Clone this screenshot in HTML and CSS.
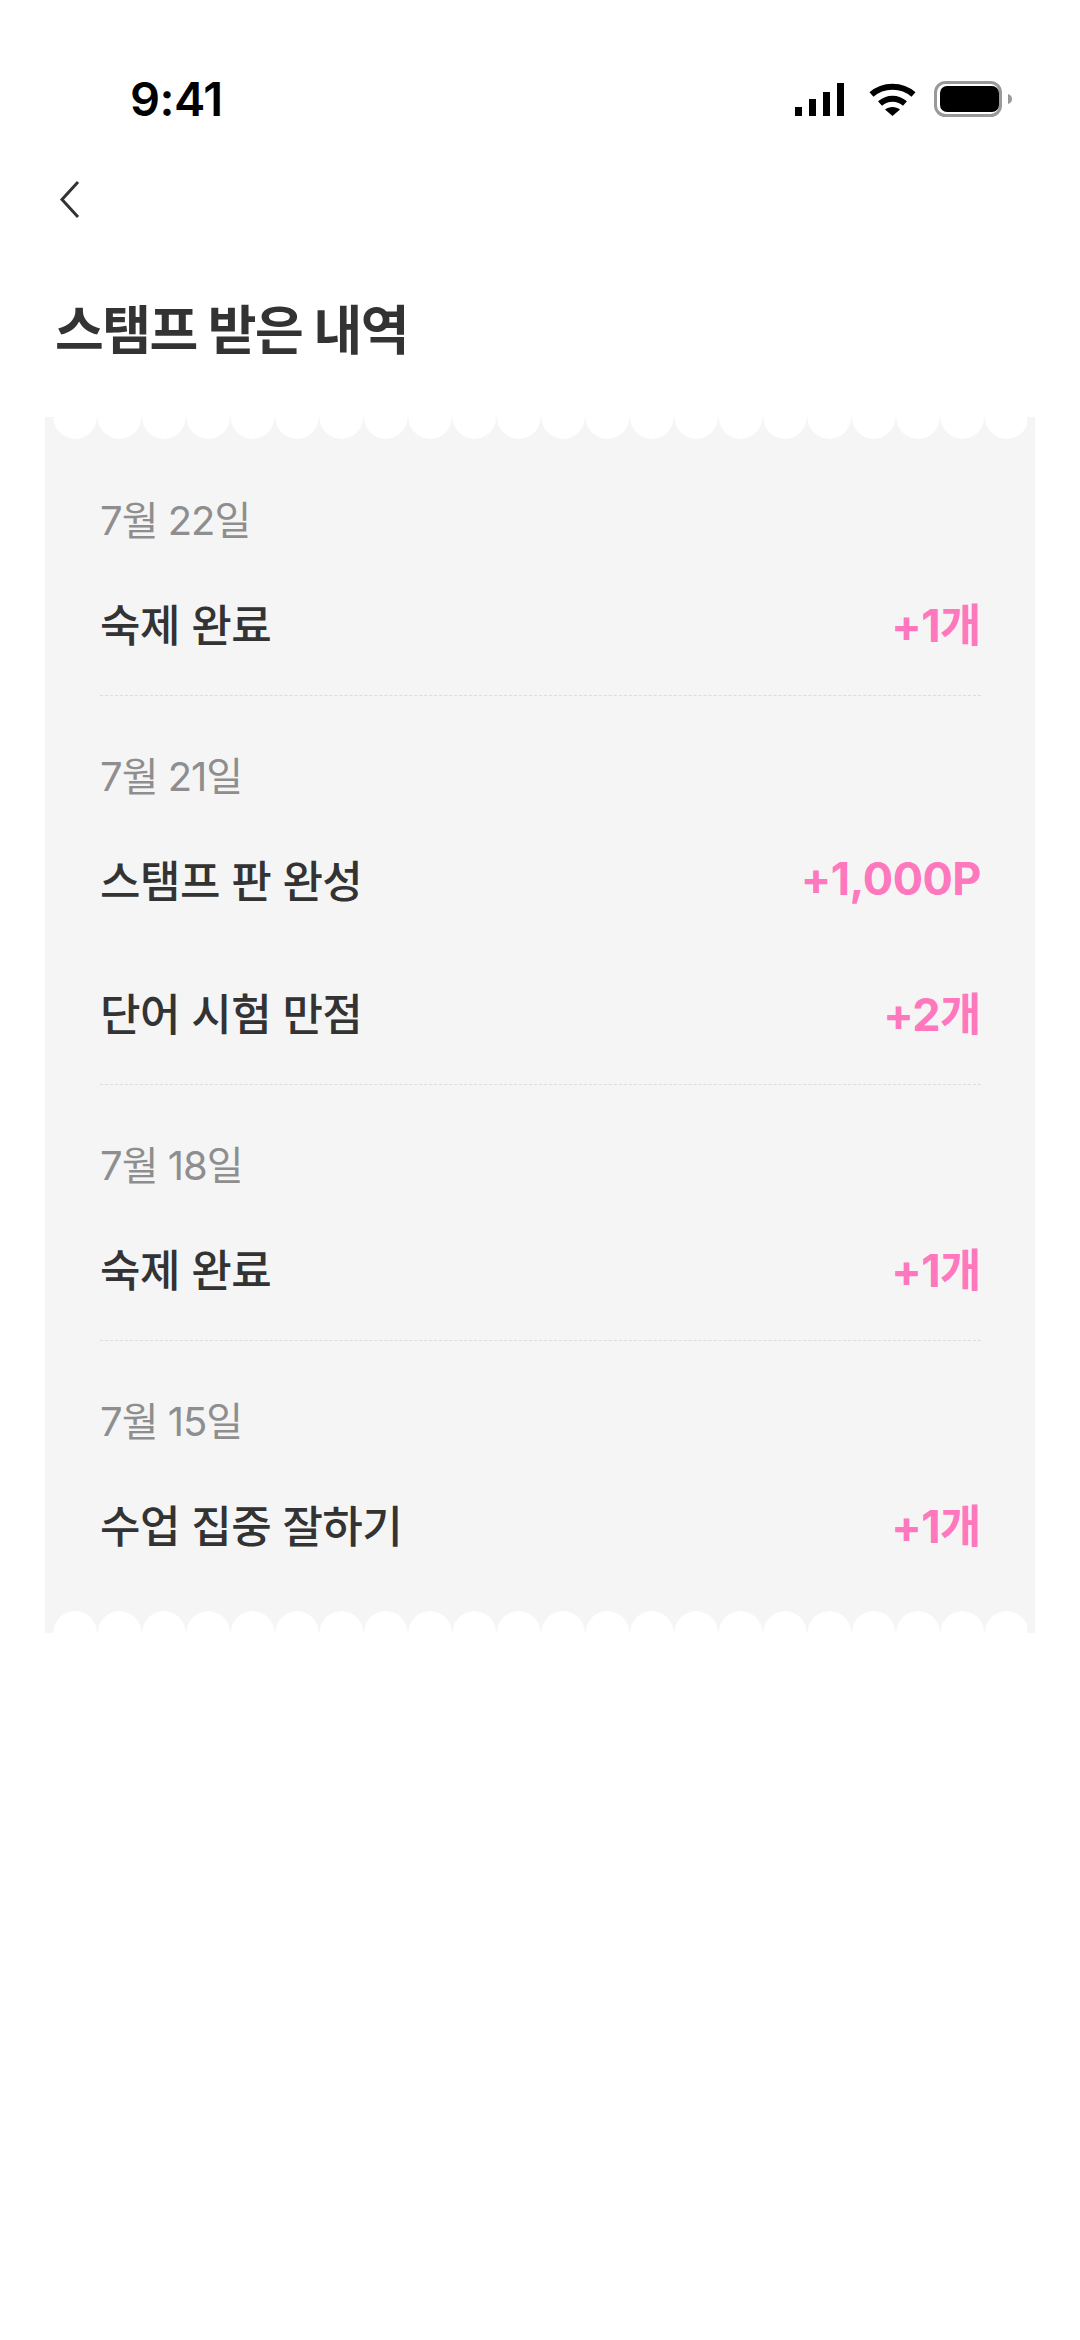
FILE: index.html
```html
<!DOCTYPE html>
<html lang="ko">
<head>
    <meta charset="UTF-8">
    <meta name="viewport" content="width=device-width, initial-scale=1.0">
    <title>스탬프 받은 내역</title>
    <link rel="stylesheet" href="styles.css">
</head>
<body>
    <div class="status-bar">
        <span class="time">9:41</span>
        <div class="status-icons">
            <svg class="signal" width="49" height="33" viewBox="0 0 49 33">
                <rect x="0" y="24" width="7" height="9" fill="#000"/>
                <rect x="14" y="16" width="7" height="17" fill="#000"/>
                <rect x="28" y="9" width="7" height="24" fill="#000"/>
                <rect x="42" y="0" width="7" height="33" fill="#000"/>
            </svg>
            <svg class="wifi" width="47" height="33" viewBox="0 0 47 33">
                <path d="M2.500 11.500C14 1 33 1 44.500 11.500" fill="none" stroke="#000" stroke-width="6"/>
                <path d="M11 20.500C18.500 14 28.500 14 36 20.500" fill="none" stroke="#000" stroke-width="6"/>
                <path d="M16 26.500C20 23 27 23 31 26.500L23.500 33Z" fill="#000"/>
            </svg>
            <svg class="battery" width="78" height="36" viewBox="0 0 78 36">
                <rect x="1.500" y="1.500" width="65" height="33" rx="10" fill="#fff" stroke="#999" stroke-width="3"/>
                <rect x="6" y="5" width="59" height="26" rx="7" fill="#000"/>
                <path d="M74 13C76.500 13.500 78 15.500 78 18C78 20.500 76.500 22.500 74 23Z" fill="#999"/>
            </svg>
        </div>
    </div>

    <div class="nav">
        <svg width="24" height="40" viewBox="0 0 24 40">
            <path d="M20 3L4 20.500L20 38" fill="none" stroke="#333" stroke-width="3"/>
        </svg>
    </div>

    <h1>스탬프 받은 내역</h1>

    <div class="ticket">
        <div class="scallop scallop-top"></div>
        <div class="list">
            <section class="day">
                <div class="date">7월 22일</div>
                <div class="row"><span>숙제 완료</span><span class="amount">+1개</span></div>
            </section>
            <section class="day">
                <div class="date">7월 21일</div>
                <div class="row"><span>스탬프 판 완성</span><span class="amount">+1,000P</span></div>
                <div class="row"><span>단어 시험 만점</span><span class="amount">+2개</span></div>
            </section>
            <section class="day">
                <div class="date">7월 18일</div>
                <div class="row"><span>숙제 완료</span><span class="amount">+1개</span></div>
            </section>
            <section class="day">
                <div class="date">7월 15일</div>
                <div class="row"><span>수업 집중 잘하기</span><span class="amount">+1개</span></div>
            </section>
        </div>
        <div class="scallop scallop-bottom"></div>
    </div>
</body>
</html>
```

FILE: styles.css
```css
* {
    box-sizing: border-box;
}
body {
    font-family: Inter, "Noto Sans CJK KR", sans-serif;
    background: #fff;
    color: #333;
    margin: 0;
    min-height: 2340px;
}
.status-bar {
    height: 152px;
    padding: 72px 68px 0 130px;
    display: flex;
    justify-content: space-between;
    align-items: flex-start;
}
.time {
    font-size: 47px;
    line-height: 54px;
    font-weight: 600;
    letter-spacing: -0.5px;
    color: #000;
}
.status-icons {
    display: flex;
    align-items: center;
    padding-top: 9px;
}
.signal {
    margin-right: 25px;
}
.wifi {
    margin-right: 18px;
}
.nav {
    height: 88px;
    padding: 27px 0 0 58px;
}
.nav svg {
    display: block;
}
h1 {
    margin: 0;
    padding: 55px 55px 0;
    height: 177px;
    font-size: 53px;
    line-height: 72px;
    font-weight: 700;
    letter-spacing: -1.500px;
}
.ticket {
    margin: 0 45px;
    background: #f5f5f6;
}
.scallop {
    height: 22px;
    margin: 0 8px;
    background-size: 44.36px 22px;
    background-repeat: repeat-x;
}
.scallop-top {
    background-image: radial-gradient(circle at 50% 0, #fff 21.5px, transparent 22px);
}
.scallop-bottom {
    background-image: radial-gradient(circle at 50% 100%, #fff 21.5px, transparent 22px);
}
.list {
    padding: 1px 54px 0 55px;
}
.day {
    padding: 54px 0 3px;
    border-bottom: 1px dashed #dcdcdc;
}
.day:last-child {
    border-bottom: none;
    padding-bottom: 18px;
}
.date {
    font-size: 40px;
    line-height: 54px;
    margin-bottom: 11px;
    color: #8e8e8e;
    letter-spacing: -1px;
}
.row {
    display: flex;
    justify-content: space-between;
    align-items: center;
    height: 133px;
    padding-bottom: 6px;
    font-size: 44px;
    font-weight: 500;
    letter-spacing: -0.5px;
}
.amount {
    font-size: 45px;
    font-weight: 700;
    color: #ff77bd;
}
```
